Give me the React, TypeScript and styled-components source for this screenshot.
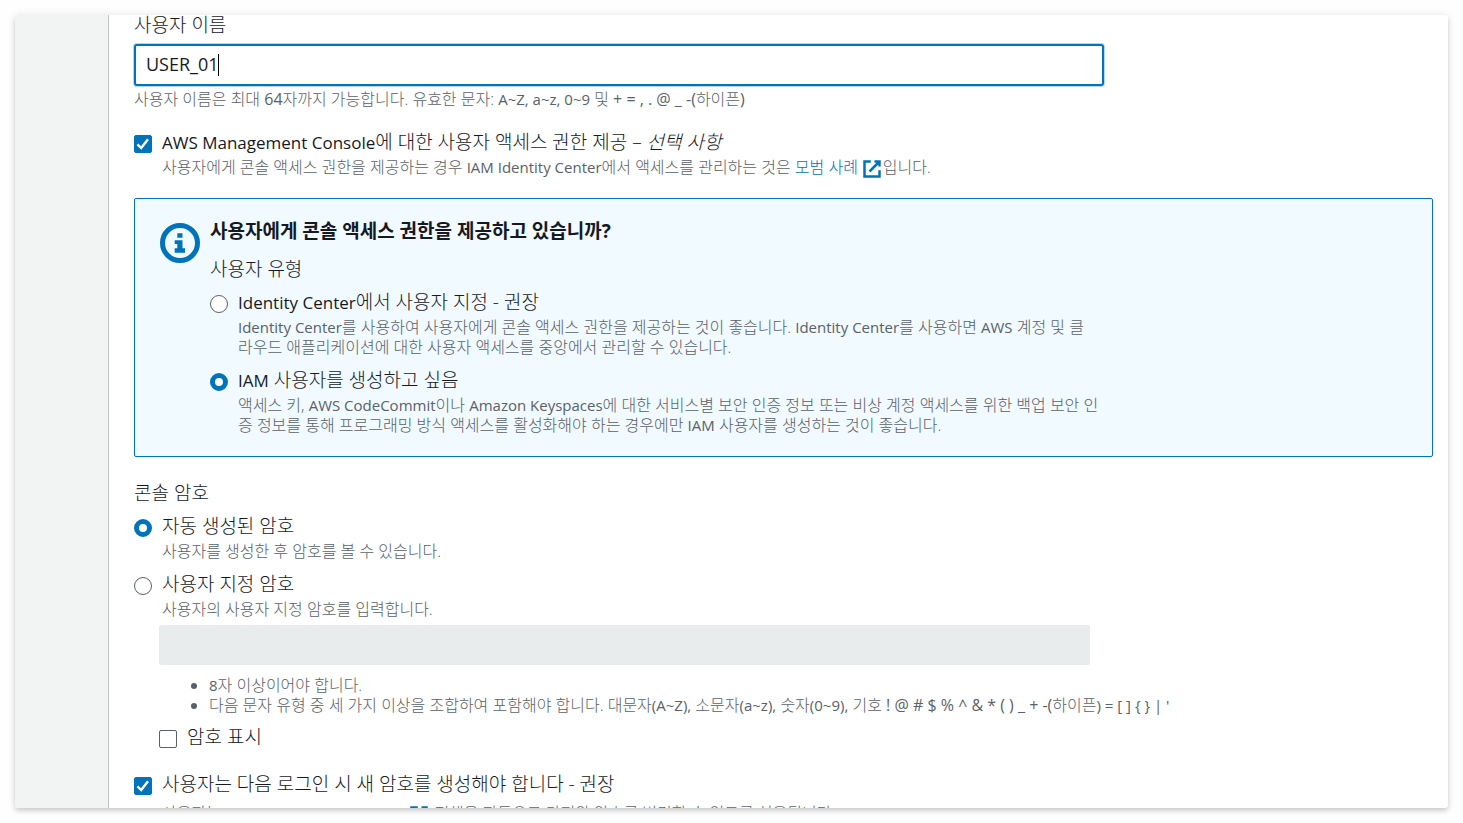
import React from "react";
import styled, { createGlobalStyle, css } from "styled-components";

const color = {
  ink: "#16191f",
  muted: "#596169",
  blue: "#0073bb",
  line: "#bcc4c5",
  side: "#f2f3f3",
  info: "#f1faff",
  disabled: "#e9eced",
};

const GlobalStyle = createGlobalStyle`
  *, *::before, *::after { box-sizing: border-box; }
  body {
    margin: 0;
    background: #fefefe;
    color: ${color.ink};
    font: 300 19px/24px "Open Sans", "Noto Sans CJK KR", sans-serif;
  }
`;

const Frame = styled.div`
  display: grid;
  grid-template-columns: 94px minmax(0, 1fr);
  height: calc(100vh - 30px);
  margin: 15px;
  overflow: hidden;
  background: #fff;
  border-radius: 3px;
  box-shadow: 0 3px 4px rgba(0, 0, 0, 0.12), 0 1px 8px rgba(0, 0, 0, 0.12);
`;

const Sidebar = styled.aside`
  background: ${color.side};
  border-right: 1px solid ${color.line};
`;

const Form = styled.form`
  padding: 0 15px 0 25px;
`;

const Columns = styled.div`
  display: grid;
  grid-template-columns: minmax(0, 3fr) minmax(0, 1fr);
  column-gap: 6px;
`;

const labelText = css`
  display: block;
  line-height: 20px;
`;

const FieldLabel = styled.label`
  ${labelText}
`;

const Group = styled.fieldset<{ $top: number }>`
  min-width: 0;
  margin: ${p => p.$top}px 0 0;
  padding: 0;
  border: 0;
`;

const Legend = styled.legend`
  ${labelText}
  padding: 0;
`;

const Latin = styled.span`
  font-size: 17px;
  font-weight: 400;
  line-height: 1;
`;

const Symbols = styled.span`
  font-weight: 400;
  line-height: 1;
`;

const Hint = styled.div<{ $top?: number }>`
  margin-top: ${p => p.$top ?? 3}px;
  color: ${color.muted};
  font-size: 16px;
  line-height: 20px;

  ${Latin} {
    font-size: 15px;
  }
`;

const InputWrap = styled.div`
  position: relative;
  margin-top: 9px;
`;

const TextInput = styled.input`
  display: block;
  width: 100%;
  height: 42px;
  padding: 0 10px 2px;
  border: 2px solid ${color.blue};
  border-radius: 3px;
  outline: 0;
  box-shadow: 0 0 0 1px #b5d6eb;
  color: ${color.ink};
  background: #fff;
  font: 400 18px/24px "Open Sans", "Noto Sans CJK KR", sans-serif;
`;

const Caret = styled.span`
  position: absolute;
  top: 10px;
  left: 84px;
  width: 1px;
  height: 22px;
  background: #000;
`;

const PasswordInput = styled.input`
  display: block;
  width: 100%;
  height: 40px;
  margin-top: 6px;
  padding: 0 10px;
  border: 0;
  border-radius: 2px;
  background: ${color.disabled};
`;

const Choice = styled.div<{ $top: number }>`
  display: grid;
  grid-template-columns: 18px minmax(0, 1fr);
  column-gap: 10px;
  align-items: start;
  margin-top: ${p => p.$top}px;
`;

const ChoiceBody = styled.div`
  min-width: 0;
`;

const ChoiceLabel = styled.label`
  display: block;
`;

const Radio = styled.input`
  appearance: none;
  width: 18px;
  height: 18px;
  margin: 5px 0 0;
  border: 1px solid ${color.muted};
  border-radius: 50%;
  background: #fff;

  &:checked {
    border: 5px solid ${color.blue};
  }
`;

const BoxCell = styled.span`
  display: grid;
  width: 18px;
  height: 18px;
  margin-top: 5px;

  > * {
    grid-area: 1 / 1;
  }
`;

const Box = styled.input`
  appearance: none;
  width: 18px;
  height: 18px;
  margin: 0;
  border: 1px solid ${color.muted};
  border-radius: 2px;
  background: #fff;

  &:checked {
    border-color: ${color.blue};
    background: ${color.blue};
  }
`;

const Tick = styled.svg`
  pointer-events: none;
`;

const Link = styled.a`
  color: ${color.blue};
  text-decoration: none;
  white-space: nowrap;
`;

const LinkIcon = styled.svg`
  width: 20px;
  height: 20px;
  margin: -2px 1px -2px 4px;
  vertical-align: -4px;
`;

const InfoBox = styled.section`
  display: flex;
  gap: 10px;
  margin-top: 21px;
  padding: 20px 25px 21px;
  border: 1px solid ${color.blue};
  border-radius: 2px;
  background: ${color.info};
`;

const InfoIcon = styled.svg`
  flex: none;
  width: 40px;
  height: 40px;
  margin-top: 4px;
`;

const InfoBody = styled.div`
  flex: 0 1 890px;
`;

const InfoTitle = styled.h2`
  margin: 0;
  font-size: 19px;
  font-weight: 700;
  line-height: 24px;
`;

const Nested = styled.div`
  padding: 0 14px 0 25px;
`;

const Rules = styled.ul`
  margin: 10px 0 0;
  padding-left: 50px;
  color: ${color.muted};
  font-size: 16px;
  line-height: 20px;
  white-space: nowrap;

  ${Latin} {
    font-size: 15px;
  }
`;

function External() {
  return (
    <LinkIcon viewBox="0 0 16 16" fill="none" stroke={color.blue} strokeWidth="2" aria-hidden="true">
      <path d="M10 2h4v4M6 10l8-8M14 9.05V14H2V2h5" />
    </LinkIcon>
  );
}

type ChoiceProps = {
  id: string;
  top: number;
  checked?: boolean;
  label: React.ReactNode;
  hint?: React.ReactNode;
  hintTop?: number;
};

function CheckChoice({ id, top, checked, label, hint, hintTop }: ChoiceProps) {
  return (
    <Choice $top={top}>
      <BoxCell>
        <Box id={id} type="checkbox" defaultChecked={checked} aria-describedby={hint ? `${id}-hint` : undefined} />
        {checked && (
          <Tick viewBox="0 0 18 18" width="18" height="18" fill="none" stroke="#fff" strokeWidth="2.4" aria-hidden="true">
            <path d="M3.5 9.4l3.7 3.6L14 4.2" />
          </Tick>
        )}
      </BoxCell>
      <ChoiceBody>
        <ChoiceLabel htmlFor={id}>{label}</ChoiceLabel>
        {hint && <Hint id={`${id}-hint`} $top={hintTop}>{hint}</Hint>}
      </ChoiceBody>
    </Choice>
  );
}

function RadioChoice({ id, name, top, checked, label, hint }: ChoiceProps & { name: string }) {
  return (
    <Choice $top={top}>
      <Radio id={id} type="radio" name={name} defaultChecked={checked} aria-describedby={`${id}-hint`} />
      <ChoiceBody>
        <ChoiceLabel htmlFor={id}>{label}</ChoiceLabel>
        <Hint id={`${id}-hint`}>{hint}</Hint>
      </ChoiceBody>
    </Choice>
  );
}

export default function App() {
  return (
    <>
      <GlobalStyle />
      <Frame>
        <Sidebar />
        <Form>
          <Columns>
            <div>
              <FieldLabel htmlFor="user-name">사용자 이름</FieldLabel>
              <InputWrap>
                <TextInput id="user-name" type="text" defaultValue="USER_01" aria-describedby="user-name-hint" />
                <Caret aria-hidden="true" />
              </InputWrap>
              <Hint id="user-name-hint">
                사용자 이름은 최대 <Symbols>64</Symbols>자까지 가능합니다. 유효한 문자: <Latin>A~Z, a~z, 0~9</Latin> 및{" "}
                <Symbols>+ = , . @ _ -(</Symbols>하이픈<Symbols>)</Symbols>
              </Hint>
            </div>
          </Columns>

          <CheckChoice
            id="console-access"
            top={21}
            checked
            label={<><Latin>AWS Management Console</Latin>에 대한 사용자 액세스 권한 제공 – <em>선택 사항</em></>}
            hint={
              <>
                사용자에게 콘솔 액세스 권한을 제공하는 경우 <Latin>IAM Identity Center</Latin>에서 액세스를 관리하는 것은{" "}
                <Link href="#best-practice">모범 사례<External /></Link>입니다.
              </>
            }
          />

          <InfoBox>
            <InfoIcon viewBox="0 0 40 40" aria-hidden="true">
              <circle cx="20" cy="20" r="17.5" fill="none" stroke={color.blue} strokeWidth="5" />
              <path fill={color.blue} d="M17.3 10.3h5.2v4.5h-5.2zM14.7 17.2h7.8v8.1H25v4.5H14.7v-4.5h2.6V21h-2.6z" />
            </InfoIcon>
            <InfoBody>
              <InfoTitle>사용자에게 콘솔 액세스 권한을 제공하고 있습니까?</InfoTitle>
              <Group $top={16}>
                <Legend>사용자 유형</Legend>
                <RadioChoice
                  id="type-identity-center"
                  name="user-type"
                  top={11}
                  label={<><Latin>Identity Center</Latin>에서 사용자 지정 - 권장</>}
                  hint={
                    <>
                      <Latin>Identity Center</Latin>를 사용하여 사용자에게 콘솔 액세스 권한을 제공하는 것이 좋습니다.{" "}
                      <Latin>Identity Center</Latin>를 사용하면 <Latin>AWS</Latin> 계정 및 클<br />
                      라우드 애플리케이션에 대한 사용자 액세스를 중앙에서 관리할 수 있습니다.
                    </>
                  }
                />
                <RadioChoice
                  id="type-iam"
                  name="user-type"
                  top={11}
                  checked
                  label={<><Latin>IAM</Latin> 사용자를 생성하고 싶음</>}
                  hint={
                    <>
                      액세스 키, <Latin>AWS CodeCommit</Latin>이나 <Latin>Amazon Keyspaces</Latin>에 대한 서비스별 보안 인증 정보
                      또는 비상 계정 액세스를 위한 백업 보안 인증 정보를 통해 프로그래밍 방식 액세스를 활성화해야 하는 경우에만{" "}
                      <Latin>IAM</Latin> 사용자를 생성하는 것이 좋습니다.
                    </>
                  }
                />
              </Group>
            </InfoBody>
          </InfoBox>

          <Group $top={26}>
            <Legend>콘솔 암호</Legend>
            <RadioChoice
              id="password-auto"
              name="password"
              top={11}
              checked
              label="자동 생성된 암호"
              hint="사용자를 생성한 후 암호를 볼 수 있습니다."
            />
            <RadioChoice
              id="password-custom"
              name="password"
              top={11}
              label="사용자 지정 암호"
              hint="사용자의 사용자 지정 암호를 입력합니다."
            />
            <Columns>
              <Nested>
                <PasswordInput type="password" disabled aria-label="사용자 지정 암호" />
                <Rules>
                  <li><Latin>8</Latin>자 이상이어야 합니다.</li>
                  <li>
                    다음 문자 유형 중 세 가지 이상을 조합하여 포함해야 합니다. 대문자<Latin>(A~Z),</Latin> 소문자
                    <Latin>(a~z),</Latin> 숫자<Latin>(0~9),</Latin> 기호{" "}
                    <Symbols>! @ # $ % ^ &amp; * ( ) _ + -(</Symbols>하이픈<Latin>) = [ ] {"{ }"} | '</Latin>
                  </li>
                </Rules>
                <CheckChoice id="show-password" top={10} label="암호 표시" />
              </Nested>
            </Columns>
          </Group>

          <CheckChoice
            id="reset-password"
            top={23}
            checked
            label="사용자는 다음 로그인 시 새 암호를 생성해야 합니다 - 권장"
            hintTop={7}
            hint={
              <>
                사용자는{" "}
                <Link href="#change-password"><Latin>IAMUserChangePassword</Latin><External /></Link> 정책을 자동으로 가져와
                암호를 변경할 수 있도록 허용됩니다.
              </>
            }
          />
        </Form>
      </Frame>
    </>
  );
}
